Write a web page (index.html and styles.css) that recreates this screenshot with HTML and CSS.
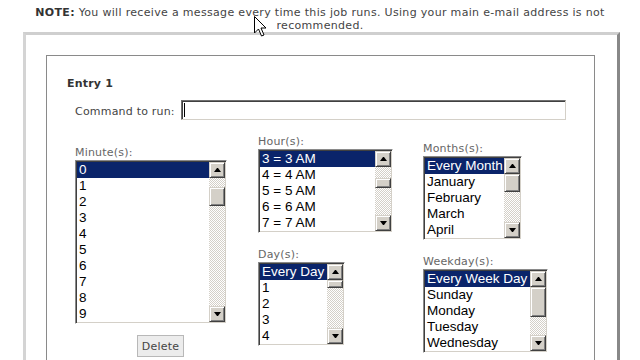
FILE: index.html
```html
<!DOCTYPE html>
<html>
<head>
<meta charset="utf-8">
<link rel="stylesheet" href="styles.css">
</head>
<body>
<p class="note"><b>NOTE:</b> You will receive a message every time this job runs. Using your main e-mail address is not recommended.</p>
<div class="panel">
  <div class="entry">
    <div class="entry-title">Entry 1</div>
    <div class="cmd-row">
      <span class="cmd-label">Command to run:</span>
      <div class="textbox"><span class="caret"></span></div>
    </div>
    <div class="fields">
      <div class="col col-1">
        <div class="field-label">Minute(s):</div>
        <div class="listbox lb-minute">
          <ul class="items">
            <li class="sel">0</li><li>1</li><li>2</li><li>3</li><li>4</li><li>5</li><li>6</li><li>7</li><li>8</li><li>9</li>
          </ul>
          <div class="scrollbar"><div class="sb-btn sb-up"></div><div class="sb-track"><div class="sb-thumb"></div></div><div class="sb-btn sb-down"></div></div>
        </div>
        <button class="delete-btn">Delete</button>
      </div>
      <div class="col col-2">
        <div class="field-label">Hour(s):</div>
        <div class="listbox lb-hour">
          <ul class="items">
            <li class="sel">3 = 3 AM</li><li>4 = 4 AM</li><li>5 = 5 AM</li><li>6 = 6 AM</li><li>7 = 7 AM</li>
          </ul>
          <div class="scrollbar"><div class="sb-btn sb-up"></div><div class="sb-track"><div class="sb-thumb"></div></div><div class="sb-btn sb-down"></div></div>
        </div>
        <div class="field-label gap">Day(s):</div>
        <div class="listbox lb-day">
          <ul class="items">
            <li class="sel">Every Day</li><li>1</li><li>2</li><li>3</li><li>4</li>
          </ul>
          <div class="scrollbar"><div class="sb-btn sb-up"></div><div class="sb-track"><div class="sb-thumb"></div></div><div class="sb-btn sb-down"></div></div>
        </div>
      </div>
      <div class="col col-3">
        <div class="field-label">Months(s):</div>
        <div class="listbox lb-month">
          <ul class="items">
            <li class="sel">Every Month</li><li>January</li><li>February</li><li>March</li><li>April</li>
          </ul>
          <div class="scrollbar"><div class="sb-btn sb-up"></div><div class="sb-track"><div class="sb-thumb"></div></div><div class="sb-btn sb-down"></div></div>
        </div>
        <div class="field-label gap">Weekday(s):</div>
        <div class="listbox lb-week">
          <ul class="items">
            <li class="sel">Every Week Day</li><li>Sunday</li><li>Monday</li><li>Tuesday</li><li>Wednesday</li>
          </ul>
          <div class="scrollbar"><div class="sb-btn sb-up"></div><div class="sb-track"><div class="sb-thumb"></div></div><div class="sb-btn sb-down"></div></div>
        </div>
      </div>
    </div>
  </div>
</div>
<svg class="cursor" width="13" height="22" viewBox="0 0 13 22"><path d="M0.5 0.5 L0.5 17 L4.5 13 L7.5 20 L10 19 L7 12 L12 12 Z" fill="#fff" stroke="#000" stroke-width="1" stroke-linejoin="miter"/></svg>
</body>
</html>
```

FILE: styles.css
```css
html, body {
  margin: 0;
  padding: 0;
  background: #fff;
}
body {
  font-family: "DejaVu Sans", Verdana, sans-serif;
  font-size: 11px;
  color: #333;
  position: relative;
  height: 360px;
  overflow: hidden;
}
.note {
  margin: 0 auto;
  padding-top: 6px;
  width: 600px;
  text-align: center;
  line-height: 13px;
  letter-spacing: 0.32px;
  color: #444;
}
.note b { color: #333; }
.panel {
  margin: 0 0 0 23px;
  height: 400px;
  border-style: solid;
  border-width: 3px 3px 0 3px;
  border-color: #cfcfcf #888 #888 #d4d4d4;
  padding: 20px 22px 0 20px;
  box-sizing: border-box;
  width: 597px;
}
.entry {
  border: 1px solid #8a8a8a;
  height: 380px;
  padding: 21px 0 0 20px;
  box-sizing: border-box;
}
.entry-title {
  font-weight: bold;
  line-height: 13px;
  color: #333;
  letter-spacing: 0.2px;
}
.cmd-row {
  display: flex;
  align-items: center;
  margin: 10px 0 0 8px;
}
.cmd-label {
  width: 106px;
  color: #444;
  line-height: 13px;
  padding-top: 3px;
  letter-spacing: 0.2px;
}
.textbox {
  width: 385px;
  height: 20px;
  box-sizing: border-box;
  border: 1px solid;
  border-color: #707070 #d4d0c8 #d4d0c8 #707070;
  box-shadow: inset 1px 1px #404040;
  background: #fff;
  padding: 2px 0 0 2px;
}
.caret {
  display: block;
  width: 1px;
  height: 14px;
  background: #000;
}
.fields {
  display: flex;
  align-items: flex-start;
  margin-left: 8px;
}
.col { display: flex; flex-direction: column; align-items: flex-start; }
.col-1 { width: 183px; margin-top: 26px; }
.col-2 { width: 165px; margin-top: 15px; }
.col-3 { margin-top: 22px; }
.field-label {
  line-height: 13px;
  color: #666;
  margin-bottom: 1px;
  letter-spacing: 0.2px;
}
.field-label.gap { margin-top: 15px; }
.listbox {
  display: flex;
  border: 1px solid;
  border-color: #8a8a8a #fff #fff #8a8a8a;
  box-shadow: inset 1px 1px #404040, inset -1px -1px #d4d0c8;
  padding: 1px;
  background: #fff;
  box-sizing: border-box;
}
.lb-minute { width: 152px; height: 164px; }
.lb-hour { width: 135px; height: 84px; }
.lb-day { width: 87px; height: 84px; }
.lb-month { width: 99px; height: 84px; }
.lb-week { width: 125px; height: 84px; }
.items {
  flex: 1;
  min-width: 0;
  margin: 0;
  padding: 0;
  list-style: none;
  font-family: "Liberation Sans", Arial, sans-serif;
  font-size: 13.5px;
  line-height: 16px;
  color: #000;
  overflow: hidden;
}
.items li {
  height: 16px;
  padding-left: 2px;
  white-space: nowrap;
}
.items li.sel {
  background: #0a246a;
  color: #fff;
}
.scrollbar {
  width: 16px;
  flex: none;
  display: flex;
  flex-direction: column;
}
.sb-btn, .sb-thumb {
  box-sizing: border-box;
  background: #d4d0c8;
  border: 1px solid;
  border-color: #d4d0c8 #404040 #404040 #d4d0c8;
  box-shadow: inset 1px 1px #fff, inset -1px -1px #808080;
}
.sb-btn {
  height: 16px;
  flex: none;
  display: flex;
  align-items: center;
  justify-content: center;
}
.sb-up::before, .sb-down::before {
  content: "";
  width: 1px;
  height: 0;
  border-left: 3px solid transparent;
  border-right: 3px solid transparent;
}
.sb-up::before { border-bottom: 4px solid #000; }
.sb-down::before { border-top: 4px solid #000; }
.sb-track {
  flex: 1;
  background: repeating-conic-gradient(#d4d0c8 0 25%, #fff 0 50%) 0 0 / 2px 2px;
}
.lb-minute .sb-thumb { margin-top: 9px; height: 19px; }
.lb-hour .sb-thumb { margin-top: 11px; height: 10px; }
.lb-month .sb-thumb { margin-top: 0; height: 18px; }
.lb-day .sb-thumb { margin-top: 0; height: 8px; }
.lb-week .sb-thumb { margin-top: 0; height: 30px; }
.delete-btn {
  margin: 11px 0 0 62px;
  width: 47px;
  height: 22px;
  padding: 0;
  font-family: "DejaVu Sans", Verdana, sans-serif;
  font-size: 11px;
  letter-spacing: 0.2px;
  color: #444;
  background: #ececec;
  border: 1px solid #b8b8b8;
  border-radius: 0;
}
.cursor {
  position: absolute;
  left: 254px;
  top: 16px;
}
```
